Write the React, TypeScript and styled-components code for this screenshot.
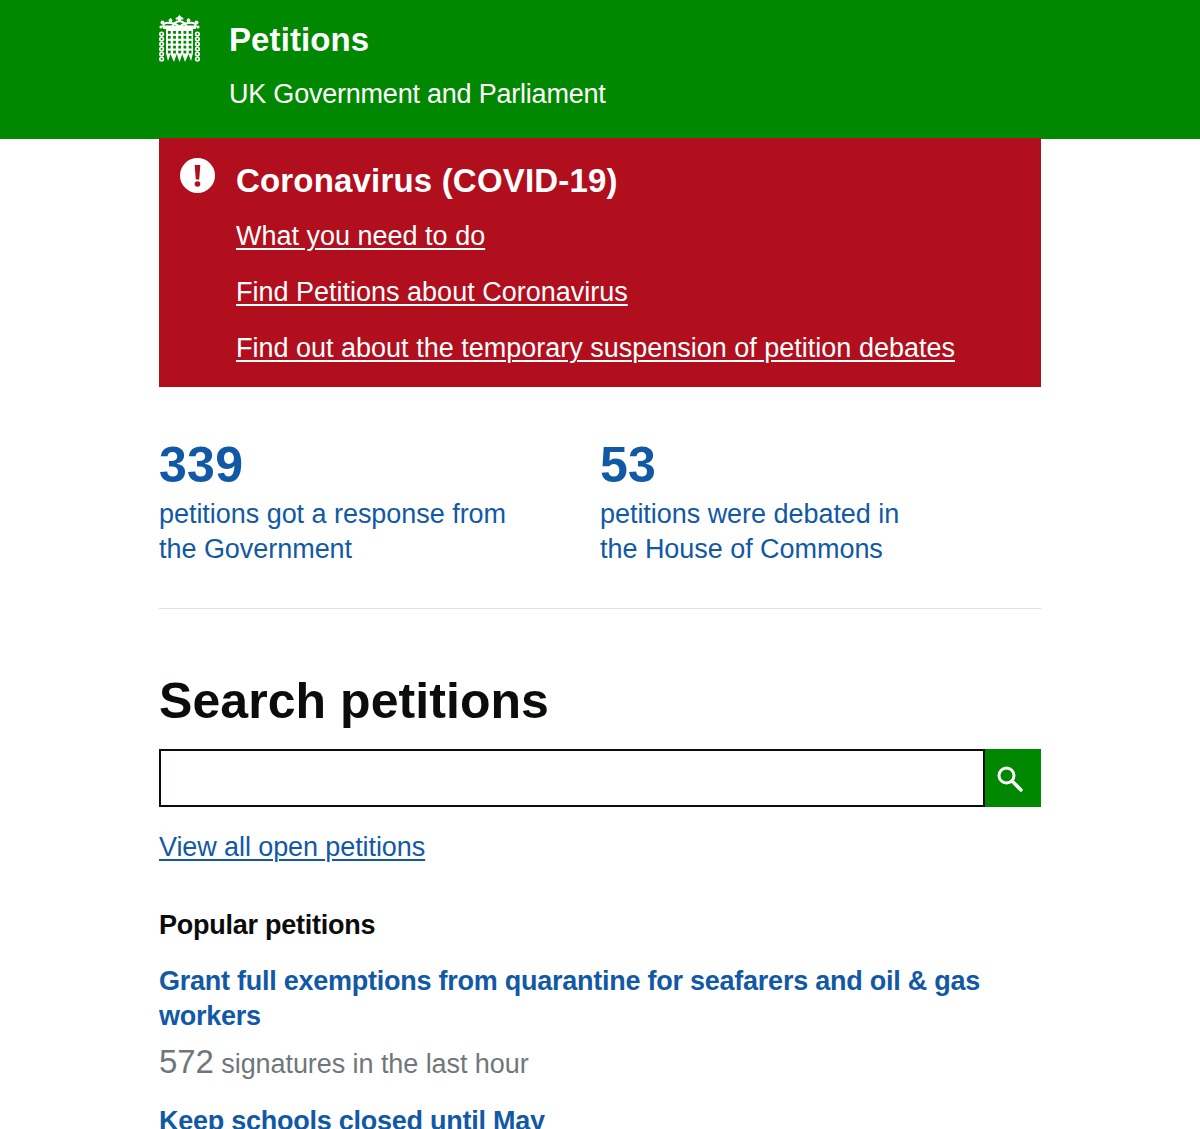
import { createGlobalStyle, styled } from 'styled-components';

const Global = createGlobalStyle`
  html, body {
    margin: 0;
    padding: 0;
    height: 1129px;
    overflow: hidden;
    background: #fff;
  }
  body {
    font-family: "Liberation Sans", Arial, sans-serif;
    color: #0b0c0c;
    -webkit-font-smoothing: antialiased;
  }
`;

const Container = styled.div`
  width: 882px;
  margin: 0 auto;
`;

const Header = styled.header`
  background: #008800;
  height: 139px;
  color: #fff;
`;

const HeaderInner = styled(Container)`
  display: flex;
  gap: 29px;
`;

const Crest = styled.svg`
  width: 41px;
  height: 48px;
  margin-top: 15px;
  flex: none;
`;

const HeaderText = styled.div`
  display: flex;
  flex-direction: column;
`;

const SiteName = styled.div`
  font-size: 33px;
  font-weight: 700;
  line-height: 40px;
  letter-spacing: 0.1px;
  margin-top: 20px;
`;

const SiteSub = styled.div`
  font-size: 27px;
  line-height: 35px;
  letter-spacing: -0.22px;
  margin-top: 17px;
`;

const Alert = styled(Container)`
  background: #b10e1e;
  color: #fff;
  height: 249px;
  margin-top: -1px;
  box-sizing: border-box;
  padding: 20px 21px 0;
  display: flex;
  gap: 21px;
`;

const AlertIcon = styled.svg`
  width: 35px;
  height: 35px;
  flex: none;
`;

const AlertBody = styled.div`
  display: flex;
  flex-direction: column;
`;

const AlertTitle = styled.div`
  font-size: 33px;
  font-weight: 700;
  line-height: 46px;
  letter-spacing: 0.18px;
  margin-bottom: 15px;
`;

const AlertLink = styled.a`
  color: #fff;
  font-size: 27px;
  line-height: 35px;
  text-decoration: underline;
  text-decoration-thickness: 2px;
  text-underline-offset: 3px;
  margin-bottom: 21px;
`;

const Stats = styled(Container)`
  display: flex;
  padding: 49px 0 41px;
  border-bottom: 1px solid #dee0e2;
`;

const Stat = styled.div`
  width: 441px;
  color: #1259a5;
`;

const StatNumber = styled.div`
  font-size: 50px;
  font-weight: 700;
  line-height: 58px;
  letter-spacing: 0.3px;
`;

const StatLabel = styled.div`
  font-size: 27px;
  line-height: 35px;
  margin-top: 3px;
  letter-spacing: -0.04px;
`;

const Main = styled(Container)`
  padding-top: 64px;
`;

const Heading = styled.h1`
  font-size: 50px;
  font-weight: 700;
  line-height: 56px;
  letter-spacing: 0.06px;
  margin: 0 0 20px;
  color: #0b0c0c;
`;

const SearchRow = styled.form`
  display: flex;
  height: 58px;
  margin: 0;
`;

const SearchInput = styled.input`
  flex: 1;
  box-sizing: border-box;
  height: 58px;
  border: 2px solid #0b0c0c;
  background: #fff;
  padding: 0 8px;
  outline: none;
  border-radius: 0;
`;

const SearchButton = styled.button`
  width: 56px;
  height: 58px;
  border: 0;
  padding: 0 8px 0 0;
  background: #008800;
  display: flex;
  align-items: center;
  justify-content: center;
`;

const ViewAll = styled.a`
  display: block;
  margin-top: 23px;
  font-size: 27px;
  line-height: 35px;
  letter-spacing: -0.09px;
  color: #1259a5;
  text-decoration: underline;
  text-decoration-thickness: 2px;
  text-underline-offset: 3px;
`;

const SubHeading = styled.h2`
  font-size: 27px;
  font-weight: 700;
  line-height: 35px;
  letter-spacing: -0.25px;
  margin: 43px 0 21px;
  color: #0b0c0c;
`;

const PetitionItem = styled.div`
  margin-bottom: 22px;
`;

const PetitionLink = styled.a`
  display: block;
  font-size: 27px;
  font-weight: 700;
  line-height: 35px;
  letter-spacing: -0.25px;
  color: #1259a5;
`;

const Count = styled.div`
  color: #6f777b;
  font-size: 27px;
  line-height: 35px;
  letter-spacing: -0.07px;
  margin-top: 10px;
`;

const CountNumber = styled.span`
  font-size: 33px;
`;

const holeRows = [0, 1, 2, 3, 4];
const holeCols = [0, 1, 2, 3, 4];
const chainLinks = [0, 1, 2, 3, 4, 5];

function CrestIcon() {
  return (
    <Crest viewBox="0 0 41 48" fill="#fff">
      {/* crown */}
      <g fill="none" stroke="#fff" strokeWidth="2">
        <path d="M4 12 Q4 7 11 8 Q17 8 20.5 12 Q24 8 30 8 Q37 7 37 12" />
        <path d="M13 12 Q15 7 20.5 6 Q26 7 28 12" />
      </g>
      <rect x="4" y="10.5" width="33" height="3.5" />
      <path d="M18 2.5 L20.5 0 L23 2.5 L22 4 V7 H19 V4 Z" />
      <circle cx="17.8" cy="3.6" r="1.2" />
      <circle cx="23.2" cy="3.6" r="1.2" />
      <path d="M9.5 5 L11.5 3 L13.5 5 L12.5 8 H10.5 Z" />
      <path d="M27.5 5 L29.5 3 L31.5 5 L30.5 8 H28.5 Z" />
      <circle cx="3.5" cy="7.5" r="2" />
      <circle cx="37.5" cy="7.5" r="2" />
      <circle cx="2" cy="12" r="1.6" />
      <circle cx="39" cy="12" r="1.6" />
      {/* portcullis */}
      <path d="M7 14 H34 V38 L32 46 L29.5 39 L26 47 L23.3 39 L20.5 47 L17.7 39 L15 47 L11.5 39 L9 46 L7 38 Z" />
      {holeRows.map((r) =>
        holeCols.map((c) => (
          <rect key={`${r}-${c}`} x={8.9 + c * 5.2} y={16 + r * 4.9} width="2.8" height="2.8" fill="#008800" />
        )),
      )}
      {/* chains */}
      {chainLinks.map((i) => (
        <g key={i} fill="none" stroke="#fff" strokeWidth="1.6">
          <circle cx="2.6" cy={19 + i * 5} r="1.8" />
          <circle cx="38.4" cy={19 + i * 5} r="1.8" />
        </g>
      ))}
    </Crest>
  );
}

export default function App() {
  return (
    <>
      <Global />
      <Header>
        <HeaderInner>
          <CrestIcon />
          <HeaderText>
            <SiteName>Petitions</SiteName>
            <SiteSub>UK Government and Parliament</SiteSub>
          </HeaderText>
        </HeaderInner>
      </Header>
      <Alert>
        <AlertIcon viewBox="0 0 35 35">
          <circle cx="17.5" cy="17.5" r="17.5" fill="#fff" />
          <path d="M14.7 7 H20.3 L19.2 21.5 H15.8 Z" fill="#b10e1e" />
          <circle cx="17.5" cy="26" r="2.8" fill="#b10e1e" />
        </AlertIcon>
        <AlertBody>
          <AlertTitle>Coronavirus (COVID-19)</AlertTitle>
          <AlertLink href="#">What you need to do</AlertLink>
          <AlertLink href="#">Find Petitions about Coronavirus</AlertLink>
          <AlertLink href="#">Find out about the temporary suspension of petition debates</AlertLink>
        </AlertBody>
      </Alert>
      <Stats>
        <Stat>
          <StatNumber>339</StatNumber>
          <StatLabel>
            petitions got a response from
            <br />
            the Government
          </StatLabel>
        </Stat>
        <Stat>
          <StatNumber>53</StatNumber>
          <StatLabel>
            petitions were debated in
            <br />
            the House of Commons
          </StatLabel>
        </Stat>
      </Stats>
      <Main>
        <Heading>Search petitions</Heading>
        <SearchRow>
          <SearchInput type="text" />
          <SearchButton type="button">
            <svg width="30" height="30" viewBox="0 0 30 30" fill="none" stroke="#fff">
              <circle cx="12.5" cy="12.5" r="7.5" strokeWidth="3" />
              <path d="M18 18 L27 27" strokeWidth="3.4" strokeLinecap="round" />
            </svg>
          </SearchButton>
        </SearchRow>
        <ViewAll href="#">View all open petitions</ViewAll>
        <SubHeading>Popular petitions</SubHeading>
        <PetitionItem>
          <PetitionLink>Grant full exemptions from quarantine for seafarers and oil &amp; gas workers</PetitionLink>
          <Count>
            <CountNumber>572</CountNumber> signatures in the last hour
          </Count>
        </PetitionItem>
        <PetitionItem>
          <PetitionLink>Keep schools closed until May</PetitionLink>
        </PetitionItem>
      </Main>
    </>
  );
}
